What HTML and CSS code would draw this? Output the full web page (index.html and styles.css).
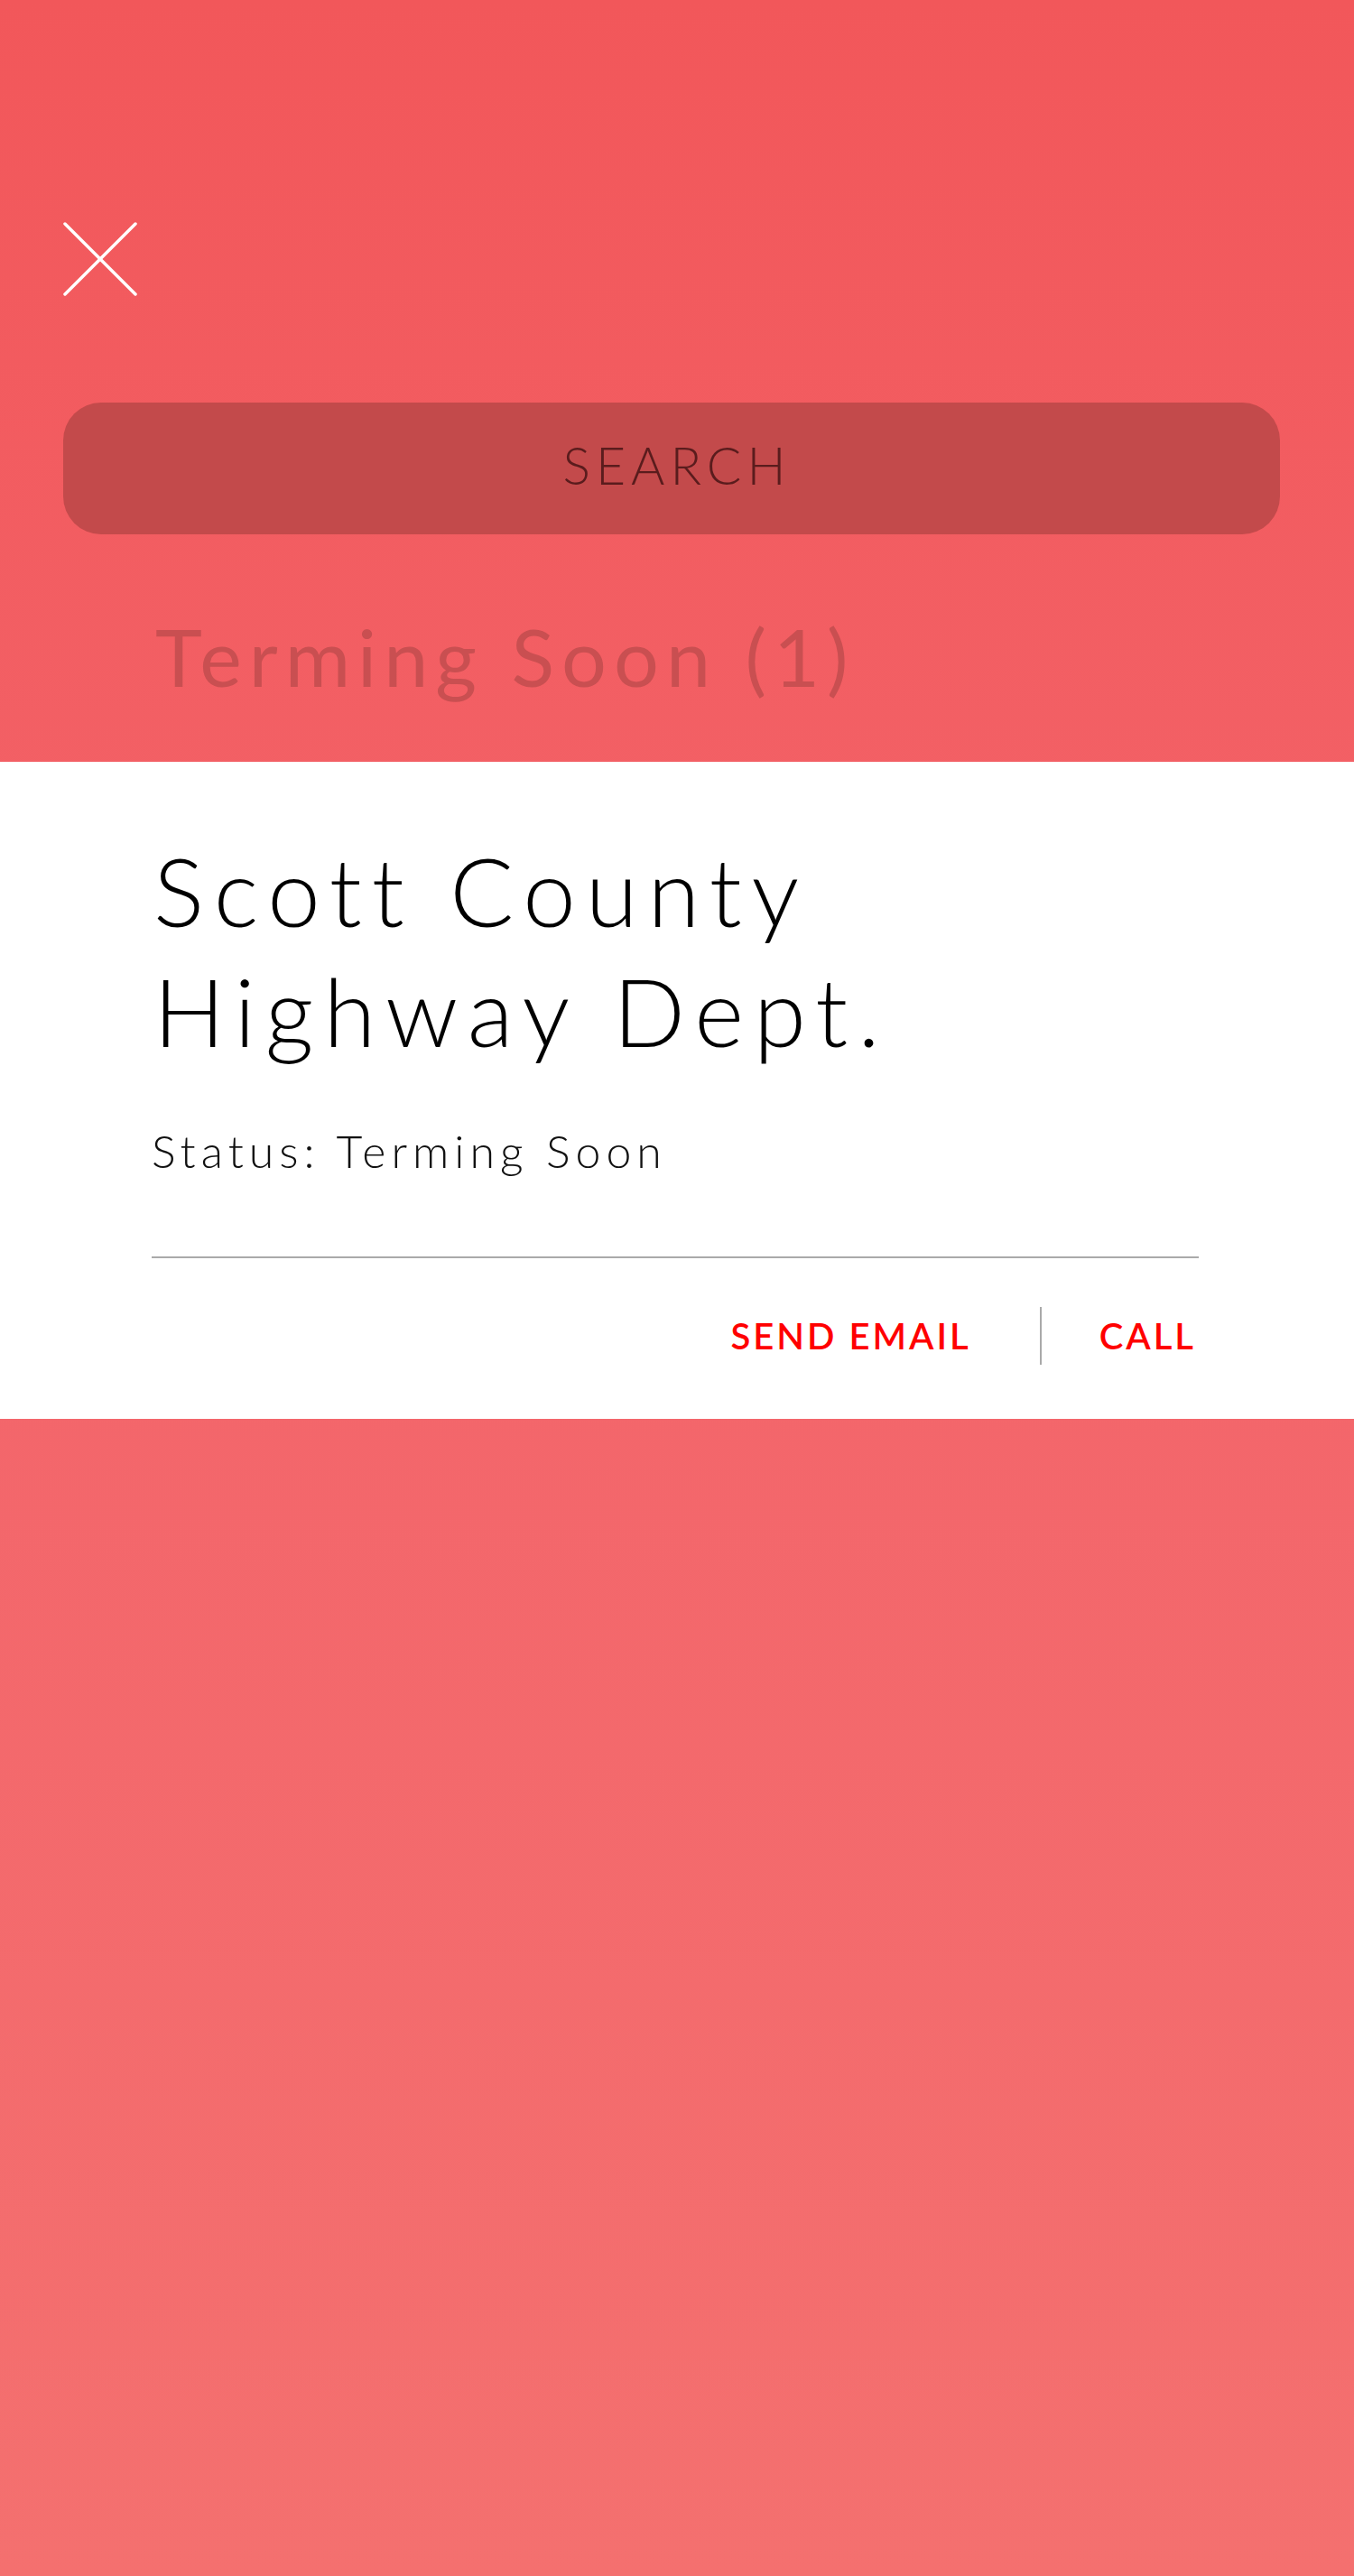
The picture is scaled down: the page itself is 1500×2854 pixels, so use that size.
FILE: index.html
```html
<!DOCTYPE html>
<html lang="en">
<head>
<meta charset="utf-8">
<title>Search</title>
<link rel="stylesheet" href="styles.css">
</head>
<body>
<div class="page">
  <header class="top">
    <button class="close" aria-label="Close">
      <svg width="84" height="84" viewBox="0 0 84 84" aria-hidden="true">
        <line x1="3" y1="3" x2="81" y2="81" stroke="#ffffff" stroke-width="3.5" stroke-linecap="round"/>
        <line x1="81" y1="3" x2="3" y2="81" stroke="#ffffff" stroke-width="3.5" stroke-linecap="round"/>
      </svg>
    </button>
    <div class="search">SEARCH</div>
    <h2 class="section-title">Terming Soon (1)</h2>
  </header>
  <section class="card">
    <h1 class="card-title">Scott County<br>Highway Dept.</h1>
    <p class="status">Status: Terming Soon</p>
    <hr class="divider">
    <div class="actions">
      <a class="action" href="#">SEND EMAIL</a>
      <span class="sep"></span>
      <a class="action call" href="#">CALL</a>
    </div>
  </section>
</div>
</body>
</html>
```

FILE: styles.css
```css
html, body {
  margin: 0;
  padding: 0;
}
body {
  font-family: "Lato", "Open Sans", "Liberation Sans", sans-serif;
  background: linear-gradient(180deg, #f2575a 0%, #f3646a 45%, #f4706f 100%);
  min-height: 2854px;
  width: 1500px;
}
.page {
  display: flex;
  flex-direction: column;
}
.top {
  display: flex;
  flex-direction: column;
  padding-top: 245px;
}
.close {
  width: 84px;
  height: 84px;
  margin-left: 69px;
  padding: 0;
  border: 0;
  background: none;
  display: block;
}
.close svg {
  display: block;
}
.search {
  box-sizing: border-box;
  margin: 117px 82px 0 70px;
  height: 146px;
  border-radius: 42px;
  background: #c34a4b;
  color: #5a1c1d;
  font-size: 57px;
  font-weight: 300;
  letter-spacing: 6px;
  padding-left: 12px;
  line-height: 68px;
  display: flex;
  align-items: center;
  justify-content: center;
  padding-bottom: 8px;
}
.section-title {
  margin: 82px 0 0 172px;
  font-size: 88px;
  line-height: 106px;
  font-weight: 400;
  letter-spacing: 8px;
  color: #c94f51;
}
.card {
  margin-top: 64px;
  background: #ffffff;
  height: 728px;
  box-sizing: border-box;
  padding: 76px 172px 60px 168px;
  display: flex;
  flex-direction: column;
}
.card-title {
  margin: 0 0 0 2px;
  font-size: 105px;
  line-height: 133px;
  font-weight: 300;
  letter-spacing: 11px;
  color: #000000;
}
.status {
  margin: 59px 0 0 0;
  font-size: 50px;
  line-height: 60px;
  font-weight: 300;
  letter-spacing: 6px;
  color: #111111;
}
.divider {
  margin: 87px 0 0 0;
  border: 0;
  height: 2px;
  background: #aaaaaa;
}
.actions {
  margin-top: 54px;
  height: 64px;
  display: flex;
  align-items: center;
  justify-content: flex-end;
}
.action {
  font-size: 40px;
  line-height: 48px;
  font-weight: 600;
  letter-spacing: 3px;
  color: #ff0000;
  text-decoration: none;
}
.sep {
  width: 2px;
  height: 64px;
  background: #aaaaaa;
  margin: 0 64px 0 76px;
}
.call {
  margin-right: 3px;
}
```
